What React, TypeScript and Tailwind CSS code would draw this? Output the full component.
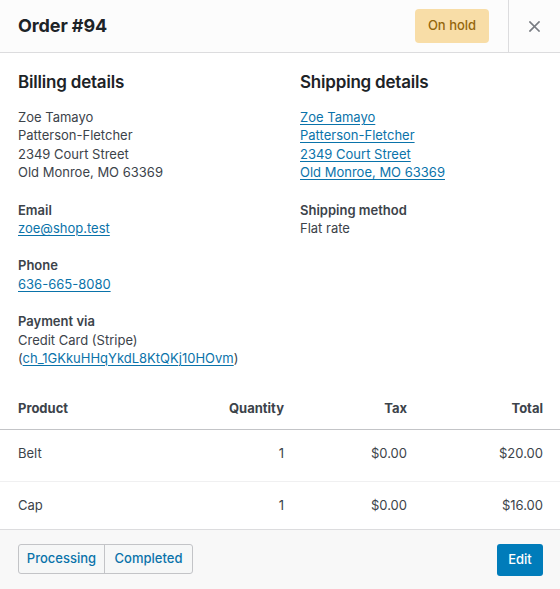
import React from "react";

const link = "text-[#0a73aa] underline underline-offset-[2px] decoration-[1px]";

export default function App() {
  return (
    <div
      className="w-[560px] h-[589px] bg-white flex flex-col overflow-hidden text-[13px] text-[#3c434a]"
      style={{ fontFamily: "Inter, 'Noto Sans', sans-serif" }}
    >
      {/* Header */}
      <div className="h-[53px] shrink-0 flex items-stretch bg-[#fcfcfc] border-b border-[#dcdcde]">
        <div className="flex-1 flex items-center pl-[18px]">
          <h1 className="text-[18px] font-bold text-[#1d2327] leading-none tracking-[-0.1px]">Order #94</h1>
        </div>
        <div className="flex items-center pr-[19px]">
          <span className="h-[34px] w-[74px] flex items-center justify-center rounded-[4px] bg-[#f8dda7] text-[#94660c] text-[13px] font-medium">
            On hold
          </span>
        </div>
        <button className="w-[52px] border-l border-[#dcdcde] flex items-center justify-center text-[#787c82]">
          <svg width="11" height="11" viewBox="0 0 11 11">
            <path d="M1 1 L10 10 M10 1 L1 10" stroke="currentColor" strokeWidth="1.7" strokeLinecap="square" />
          </svg>
        </button>
      </div>

      {/* Body */}
      <div className="flex-1 overflow-hidden">
        <div className="grid grid-cols-[282px_1fr] px-[18px] pt-[16px] leading-[18.4px]">
          <div>
            <h2 className="text-[17px] font-semibold text-[#1d2327] leading-[26px] tracking-[-0.2px]">Billing details</h2>
            <div className="mt-[13px]">
              <div>Zoe Tamayo</div>
              <div>Patterson-Fletcher</div>
              <div>2349 Court Street</div>
              <div>Old Monroe, MO 63369</div>
            </div>
            <div className="mt-[19px]">
              <div className="font-semibold">Email</div>
              <a className={link}>zoe@shop.test</a>
            </div>
            <div className="mt-[19px]">
              <div className="font-semibold">Phone</div>
              <a className={link}>636-665-8080</a>
            </div>
            <div className="mt-[19px]">
              <div className="font-semibold">Payment via</div>
              <div>Credit Card (Stripe)</div>
              <div>
                (<a className={link}>ch_1GKkuHHqYkdL8KtQKj10HOvm</a>)
              </div>
            </div>
          </div>
          <div>
            <h2 className="text-[17px] font-semibold text-[#1d2327] leading-[26px] tracking-[-0.2px]">Shipping details</h2>
            <div className="mt-[13px] flex flex-col items-start">
              <a className={link}>Zoe Tamayo</a>
              <a className={link}>Patterson-Fletcher</a>
              <a className={link}>2349 Court Street</a>
              <a className={link}>Old Monroe, MO 63369</a>
            </div>
            <div className="mt-[19px]">
              <div className="font-semibold">Shipping method</div>
              <div>Flat rate</div>
            </div>
          </div>
        </div>

        {/* Table */}
        <div className="mt-[19px]">
          <div className="flex items-center h-[44px] pt-[1px] border-b border-[#c3c4c7] font-bold">
            <div className="flex-1 pl-[18px]">Product</div>
            <div className="w-[124px] text-right">Quantity</div>
            <div className="w-[123px] text-right">Tax</div>
            <div className="w-[153px] text-right pr-[17px]">Total</div>
          </div>
          {[
            ["Belt", "1", "$0.00", "$20.00"],
            ["Cap", "1", "$0.00", "$16.00"],
          ].map((r) => (
            <div key={r[0]} className="flex items-start h-[52px] pt-[14px] border-b border-[#f0f0f1] leading-[18px]">
              <div className="flex-1 pl-[18px]">{r[0]}</div>
              <div className="w-[124px] text-right">{r[1]}</div>
              <div className="w-[123px] text-right">{r[2]}</div>
              <div className="w-[153px] text-right pr-[17px]">{r[3]}</div>
            </div>
          ))}
        </div>
      </div>

      {/* Footer */}
      <div className="h-[60px] shrink-0 bg-[#f8f8f8] border-t border-[#dcdcde] flex items-start justify-between px-[17px] pt-[14px]">
        <div className="flex h-[30px] ml-[1px] rounded-[3px] border border-[#c3c4c7] bg-[#f6f7f7] text-[#0a73aa] font-medium overflow-hidden">
          <button className="w-[86px] border-r border-[#c3c4c7] flex items-center justify-center">Processing</button>
          <button className="w-[87px] flex items-center justify-center">Completed</button>
        </div>
        <button className="h-[32px] w-[46px] rounded-[3px] bg-[#007cba] text-white font-medium flex items-center justify-center">
          Edit
        </button>
      </div>
    </div>
  );
}
